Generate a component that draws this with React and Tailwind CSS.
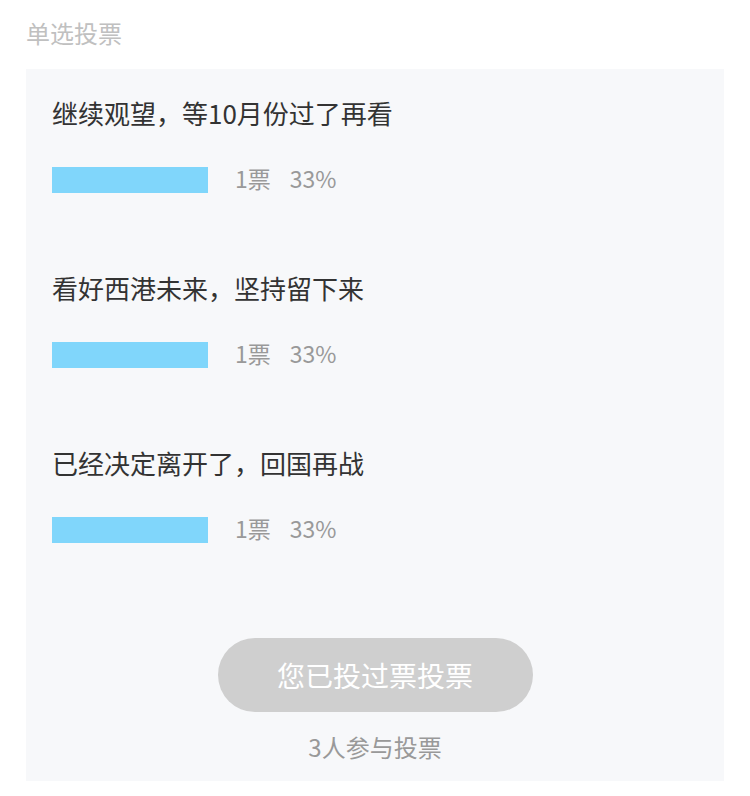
export default function App() {
  const options = [
    "继续观望，等10月份过了再看",
    "看好西港未来，坚持留下来",
    "已经决定离开了，回国再战",
  ];
  return (
    <div
      className="w-[750px] bg-white pt-[17px] pb-[16px]"
      style={{ fontFamily: '"Noto Sans CJK SC", "Noto Sans", sans-serif' }}
    >
      <div className="px-[26px] text-[24px] leading-[32px] text-[#c0c0c0]">单选投票</div>
      <div className="mx-[26px] mt-[20px] bg-[#f7f8fa] pt-[26px] pb-[18px]">
        <div className="flex flex-col gap-[77px] px-[26px]">
          {options.map((o) => (
            <div key={o} className="flex flex-col gap-[36px]">
              <div className="text-[26px] leading-[36px] text-[#333333]">{o}</div>
              <div className="flex h-[26px] items-center">
                <div className="h-[26px] w-[156px] bg-[#80d6fb]" />
                <span className="mb-[5px] ml-[27px] text-[23px] leading-[26px] text-[#999999]">1票</span>
                <span className="mb-[5px] ml-[19px] text-[23px] leading-[26px] text-[#999999]">33%</span>
              </div>
            </div>
          ))}
        </div>
        <div className="mt-[95px] flex flex-col items-center">
          <div className="flex h-[74px] w-[315px] items-center justify-center rounded-full bg-[#cfcfcf] text-[28px] text-white">
            您已投过票投票
          </div>
          <div className="mt-[19px] text-[24px] leading-[32px] text-[#999999]">3人参与投票</div>
        </div>
      </div>
    </div>
  );
}
